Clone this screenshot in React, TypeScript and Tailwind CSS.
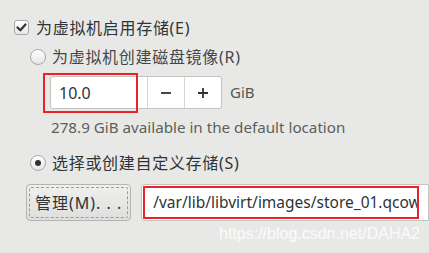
import React from 'react';

const ui = "font-['Noto_Sans','Noto_Sans_CJK_SC',sans-serif]";

const Check = () => (
  <div className="w-[15px] h-[15px] rounded-[3px] border border-[#a8a8a8] bg-gradient-to-b from-white to-[#e8e8e8] flex items-center justify-center">
    <svg width="11" height="11" viewBox="0 0 11 11">
      <path d="M1.5 5.5 L4.3 8.3 L9.5 2.5" fill="none" stroke="#2e3436" strokeWidth="2.2" strokeLinecap="round" strokeLinejoin="round" />
    </svg>
  </div>
);

const Radio = ({ on }: { on?: boolean }) => (
  <div className="w-[16px] h-[16px] rounded-full border border-[#a8a8a8] bg-gradient-to-b from-white to-[#e6e6e6] flex items-center justify-center">
    {on && <div className="w-[6px] h-[6px] rounded-full bg-[#2e3436]" />}
  </div>
);

const App = () => {
  return (
    <div className={`relative w-[429px] h-[253px] overflow-hidden bg-[#e8e8e7] text-[#2e3436] ${ui}`}>
      <div className="flex flex-col">
        {/* enable storage */}
        <div className="flex items-center gap-[7px] pl-[14px] pt-[18px] h-[37px]">
          <Check />
          <span className="text-[16px] tracking-[0.7px] leading-none">为虚拟机启用存储(E)</span>
        </div>

        {/* create disk image */}
        <div className="flex items-center gap-[6px] pl-[30px] mt-[11px] h-[18px]">
          <Radio />
          <span className="text-[16px] tracking-[0.7px] leading-none text-[#45484a]">为虚拟机创建磁盘镜像(R)</span>
        </div>

        <div className="flex items-center pl-[50px] mt-[10px]">
          <div className="relative flex h-[33px] w-[172px] rounded-[3px] border border-[#c4c4c2] bg-white">
            <div className="flex-1 flex items-center pl-[8px] text-[16px]">10.0</div>
            <div className="w-[37px] border-l border-[#d6d6d4] flex items-center justify-center">
              <svg width="12" height="12" viewBox="0 0 12 12"><path d="M1 6 H11" stroke="#2e3436" strokeWidth="1.8" /></svg>
            </div>
            <div className="w-[37px] border-l border-[#d6d6d4] flex items-center justify-center">
              <svg width="12" height="12" viewBox="0 0 12 12"><path d="M1 6 H11 M6 1 V11" stroke="#2e3436" strokeWidth="1.8" /></svg>
            </div>
            <div className="absolute left-[-8px] top-[-4px] w-[95px] h-[40px] border-2 border-[#e8232a]" />
          </div>
          <span className="ml-[8px] text-[15px] text-[#555753]">GiB</span>
        </div>

        <div className="pl-[51px] mt-[8px] text-[15.2px] leading-[20px] text-[#5d5f5b]">
          278.9 GiB available in the default location
        </div>

        {/* custom storage */}
        <div className="flex items-center gap-[6px] pl-[30px] mt-[17px] h-[18px]">
          <Radio on />
          <span className="text-[16px] tracking-[0.7px] leading-none">选择或创建自定义存储(S)</span>
        </div>

        <div className="flex items-center pl-[26px] mt-[12px] gap-[10px]">
          <div className="w-[106px] h-[37px] rounded-[4px] border border-[#b4b4b2] bg-gradient-to-b from-[#f0f0ef] to-[#dededc] p-[2px]">
            <div className="w-full h-full border border-dashed border-[#9a9a98] rounded-[2px] flex items-center justify-center text-[16px] tracking-[1px]">
              管理(M). . .
            </div>
          </div>
          <div className="h-[37px] w-[290px] rounded-l-[3px] border border-[#c4c4c2] bg-white p-[1px]">
            <div className="w-[276px] h-full border-2 border-[#e8232a] flex items-center pl-[8px] overflow-hidden whitespace-nowrap text-[15.5px]">
              /var/lib/libvirt/images/store_01.qcow2
            </div>
          </div>
        </div>
      </div>

      <div className="absolute left-[219px] top-[224px] font-['Liberation_Sans',sans-serif] text-[16px] leading-[20px] text-white/80">
        https://blog.csdn.net/DAHA2
      </div>
    </div>
  );
};

export default App;
